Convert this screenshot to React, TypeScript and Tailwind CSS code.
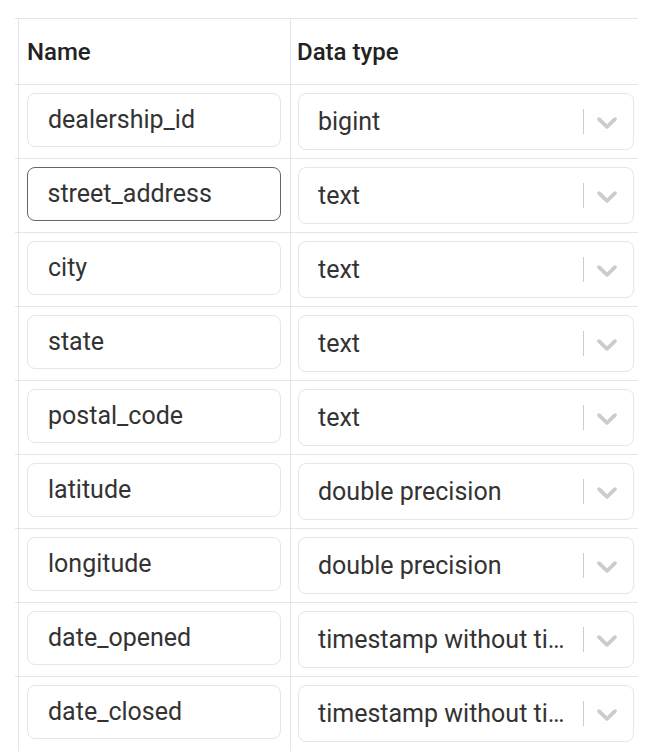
import React from "react";

const rows: [string, string][] = [
  ["dealership_id", "bigint"],
  ["street_address", "text"],
  ["city", "text"],
  ["state", "text"],
  ["postal_code", "text"],
  ["latitude", "double precision"],
  ["longitude", "double precision"],
  ["date_opened", "timestamp without time zone"],
  ["date_closed", "timestamp without time zone"],
];

function Chevron() {
  return (
    <svg width="34" height="34" viewBox="0 0 20 20" className="shrink-0 fill-[#cccccc]">
      <path d="M4.516 7.548c0.436-0.446 1.043-0.481 1.576 0l3.908 3.747 3.908-3.747c0.533-0.481 1.141-0.446 1.574 0 0.436 0.445 0.408 1.197 0 1.615-0.406 0.418-4.695 4.502-4.695 4.502-0.217 0.223-0.502 0.335-0.787 0.335s-0.57-0.112-0.789-0.335c0 0-4.287-4.084-4.695-4.502s-0.436-1.17 0-1.615z" />
    </svg>
  );
}

export default function App() {
  return (
    <div className="min-h-screen bg-white pt-[18px] pl-[15px] [font-family:Roboto,'Liberation_Sans',sans-serif]">
      <div className="w-[623px] border-t border-[#e4e4ea]">
        <div className="flex h-[66px] border-b border-[#e4e4ea]">
          <div className="ml-[3px] flex w-[272px] items-center border-l border-[#e4e4ea] pl-[8px] text-[24px] font-medium text-[#222]">
            Name
          </div>
          <div className="flex w-[348px] items-center border-l border-[#e4e4ea] pl-[6px] text-[24px] font-medium text-[#222]">
            Data type
          </div>
        </div>
        {rows.map(([name, type], i) => (
          <div
            key={name}
            className={
              i === rows.length - 1
                ? "flex h-[74px]"
                : "flex h-[74px] border-b border-[#e4e4ea]"
            }
          >
            <div className="ml-[3px] w-[272px] border-l border-[#e4e4ea] pt-[8px] pl-[8px]">
              <div
                className={
                  i === 1
                    ? "flex h-[54px] w-[254px] items-center rounded-[8px] border-[1.5px] border-[#666] pl-[19.5px] text-[25px] text-[#333]"
                    : "flex h-[54px] w-[254px] items-center rounded-[8px] border border-[#e6e6e6] pl-[20px] text-[25px] text-[#333]"
                }
              >
                {name}
              </div>
            </div>
            <div className="w-[348px] border-l border-[#e4e4ea] pt-[8px] pl-[7px]">
              <div className="flex h-[57px] w-[336px] items-center rounded-[8px] border border-[#e6e6e6] pl-[19px] pr-[9px]">
                <span className="min-w-0 flex-1 truncate text-[25px] text-[#333]">{type}</span>
                <span className="h-[25px] w-[1.5px] shrink-0 bg-[#cccccc]" />
                <span className="ml-[6px] flex">
                  <Chevron />
                </span>
              </div>
            </div>
          </div>
        ))}
      </div>
    </div>
  );
}
